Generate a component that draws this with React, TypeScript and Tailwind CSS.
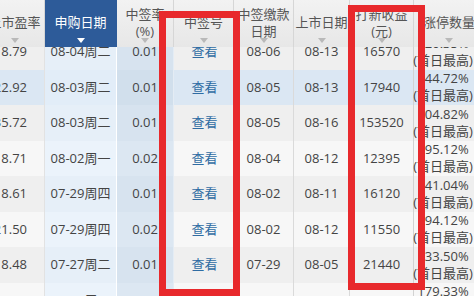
import React from "react";

type Row = {
  pe: string;
  date: string;
  rate: string;
  pay: string;
  list: string;
  profit: string;
  pct: string;
};

const rows: Row[] = [
  { pe: "18.79", date: "08-04周二", rate: "0.01", pay: "08-06", list: "08-13", profit: "16570", pct: "120.35%" },
  { pe: "22.92", date: "08-03周二", rate: "0.01", pay: "08-05", list: "08-13", profit: "17940", pct: "144.72%" },
  { pe: "35.72", date: "08-03周二", rate: "0.01", pay: "08-05", list: "08-16", profit: "153520", pct: "104.82%" },
  { pe: "18.71", date: "08-02周一", rate: "0.02", pay: "08-04", list: "08-12", profit: "12395", pct: "195.12%" },
  { pe: "18.61", date: "07-29周四", rate: "0.01", pay: "08-02", list: "08-11", profit: "16120", pct: "141.04%" },
  { pe: "21.50", date: "07-29周四", rate: "0.02", pay: "08-02", list: "08-12", profit: "11550", pct: "194.12%" },
  { pe: "18.48", date: "07-27周二", rate: "0.01", pay: "07-29", list: "08-05", profit: "21440", pct: "133.50%" },
  { pe: "19.02", date: "07-26周一", rate: "0.01", pay: "07-28", list: "08-04", profit: "18630", pct: "179.33%" },
];

function Caret({ white }: { white?: boolean }) {
  return (
    <svg
      width="8"
      height="5"
      viewBox="0 0 8 5"
      className="absolute left-1/2 -translate-x-1/2 bottom-[4px]"
    >
      <path d="M0 0 L8 0 L4 5 Z" fill={white ? "#ffffff" : "#b9b9b9"} />
    </svg>
  );
}

function Head({
  w,
  lines,
  active,
}: {
  w: string;
  lines: string[];
  active?: boolean;
}) {
  return (
    <div
      className={`relative ${w} h-[47px] shrink-0 flex flex-col items-center justify-center pb-[2px] border-r ${
        active
          ? "bg-[#2d5b99] text-white border-[#2d5b99]"
          : "bg-gradient-to-b from-[#f2f2f2] to-[#e7e7e7] text-[#555555] border-[#d6d6d6]"
      }`}
    >
      {lines.map((l) => (
        <div key={l} className="leading-[17px] whitespace-nowrap">
          {l}
        </div>
      ))}
      <Caret white={active} />
    </div>
  );
}

export default function App() {
  return (
    <div
      className="relative w-[474px] h-[296px] overflow-hidden bg-[#f7f7f7] text-[13px] text-[#444444]"
      style={{ fontFamily: "'Open Sans','Noto Sans CJK SC',sans-serif" }}
    >
      <div className="ml-[-15px] w-[520px]">
        {/* header */}
        <div className="flex relative z-10">
          <Head w="w-[60px]" lines={["上市盈率"]} />
          <Head w="w-[72px]" lines={["申购日期"]} active />
          <Head w="w-[57px]" lines={["中签率", "(%)"]} />
          <Head w="w-[60px]" lines={["中签号"]} />
          <Head w="w-[60px]" lines={["中签缴款", "日期"]} />
          <Head w="w-[56px]" lines={["上市日期"]} />
          <Head w="w-[64px]" lines={["打新收益", "(元)"]} />
          <Head w="w-[71px]" lines={["涨停数量"]} />
        </div>
        {/* body */}
        <div className="h-[249px] overflow-hidden">
          <div className="mt-[-13px]">
            {rows.map((r, i) => {
              const sel = i === 1;
              const dark = i % 2 === 0;
              const base = sel
                ? "bg-[#dbe7f3]"
                : dark
                ? "bg-[#efefef]"
                : "bg-[#f7f7f7]";
              const c2 = sel ? "bg-[#e2edf8]" : dark ? "bg-[#e6eff8]" : "bg-[#ebf3fb]";
              const c3 = sel ? "bg-[#d1dfec]" : dark ? "bg-[#d7e3ef]" : "bg-[#dce7f2]";
              return (
                <div key={i} className="flex h-[35.5px]">
                  <div className={`w-[60px] shrink-0 flex items-center justify-end pr-[17px] border-r border-[#e2e2e2] ${base}`}>
                    {r.pe}
                  </div>
                  <div className={`w-[72px] shrink-0 flex items-center justify-center border-r border-white ${c2}`}>
                    {r.date}
                  </div>
                  <div className={`w-[57px] shrink-0 flex items-center justify-center border-r border-[#e4ecf4] ${c3}`}>
                    {r.rate}
                  </div>
                  <div className={`w-[60px] shrink-0 flex items-center justify-center pl-[2px] border-r border-[#dedede] text-[#2f6ca3] ${base}`}>
                    查看
                  </div>
                  <div className={`w-[60px] shrink-0 flex items-center justify-center border-r border-[#dadada] ${base}`}>
                    {r.pay}
                  </div>
                  <div className={`w-[56px] shrink-0 flex items-center justify-center border-r border-[#dadada] ${base}`}>
                    {r.list}
                  </div>
                  <div className={`w-[64px] shrink-0 flex items-center justify-center border-r border-[#d2d2d2] ${base}`}>
                    {r.profit}
                  </div>
                  <div className={`w-[71px] shrink-0 flex flex-col items-center justify-center pr-[13px] ${base}`}>
                    <div className="leading-[17px] whitespace-nowrap">{r.pct}</div>
                    <div className="leading-[17px] whitespace-nowrap">(首日最高)</div>
                  </div>
                </div>
              );
            })}
          </div>
        </div>
      </div>
      {/* red highlight boxes */}
      <div className="absolute left-[159px] top-[11px] w-[81px] h-[285px] border-[7px] border-[#e8292c] z-20" />
      <div className="absolute left-[348px] top-[5px] w-[77px] h-[285px] border-[7px] border-[#e8292c] z-20" />
    </div>
  );
}
